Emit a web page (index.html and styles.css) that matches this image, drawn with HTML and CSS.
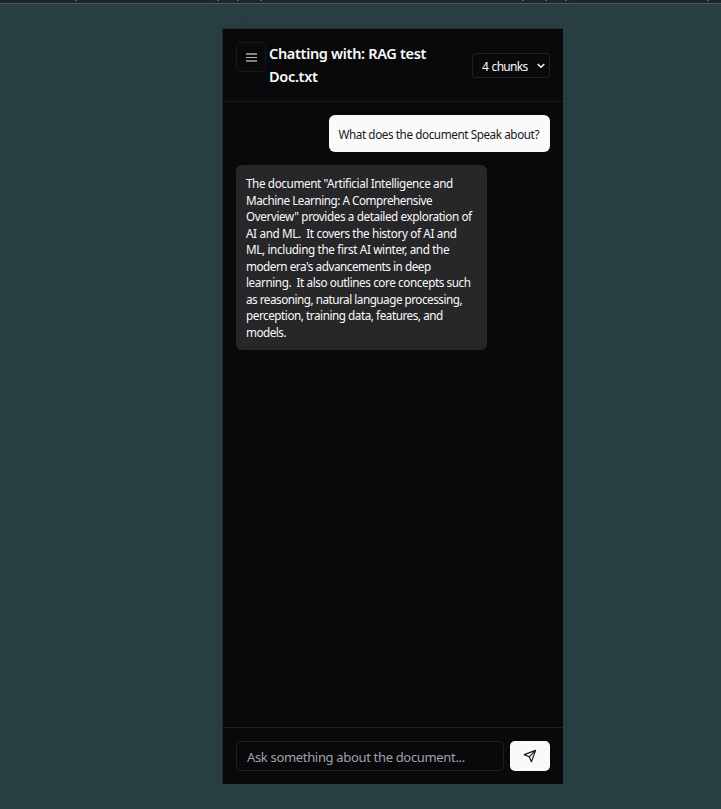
FILE: index.html
```html
<!DOCTYPE html>
<html lang="en">
<head>
<meta charset="utf-8">
<title>Document chat</title>
<link rel="stylesheet" href="styles.css">
</head>
<body>
<div class="topbar"><i class="tick t1"></i><i class="tick t2"></i><i class="tick t3"></i><i class="tick t4"></i><i class="tick t5"></i><i class="tick t6"></i><i class="tick t7"></i><i class="tick t8"></i></div>
<main class="panel">
  <header class="header">
    <button class="menu" aria-label="Menu">
      <svg width="11" height="9" viewBox="0 0 11 9" fill="none"><path d="M0 1h11" stroke="#858585" stroke-width="2"/><path d="M0 4.5h11" stroke="#b5b5b5"/><path d="M0 8h11" stroke="#a5a5a5" stroke-width="1.5"/></svg>
    </button>
    <h1 class="title">Chatting with: RAG test<br>Doc.txt</h1>
    <div class="select"><span>4 chunks</span>
      <svg width="8" height="6" viewBox="0 0 8 6" fill="none" stroke="#fff" stroke-width="1.4"><path d="M.7 1L4 4.3 7.3 1"/></svg>
    </div>
  </header>
  <section class="messages">
    <div class="bubble user"><span>What does the document Speak about?</span></div>
    <div class="bubble bot"><span class="l1">The document "Artificial Intelligence and</span>
<span class="l2">Machine Learning: A Comprehensive</span>
<span class="l3">Overview" provides a detailed exploration of</span>
<span class="l4">AI and ML.  It covers the history of AI and</span>
<span class="l5">ML, including the first AI winter, and the</span>
<span class="l6">modern era's advancements in deep</span>
<span class="l7">learning.  It also outlines core concepts such</span>
<span class="l8">as reasoning, natural language processing,</span>
<span class="l9">perception, training data, features, and</span>
<span class="l10">models.</span></div>
  </section>
  <footer class="footer">
    <div class="input"><span>Ask something about the document...</span></div>
    <button class="send" aria-label="Send">
      <svg width="14" height="14" viewBox="0 0 14 14" fill="none" stroke="#18181b" stroke-width="1.15" stroke-linejoin="round"><path d="M12.6 1.4L1.2 5.6l5 2.2 2.2 5z M12.6 1.4L6.2 7.8"/></svg>
    </button>
  </footer>
</main>
</body>
</html>
```
FILE: styles.css
```css
* { box-sizing: border-box; }
body {
  margin: 0;
  width: 721px;
  height: 809px;
  overflow: hidden;
  background: #284044;
  font-family: "Noto Sans", "Liberation Sans", sans-serif;
  color: #fafafa;
}
.topbar {
  position: relative;
  height: 4px;
  background: #1e2628;
  border-bottom: 1px solid #43595d;
}
.tick { position: absolute; top: 0; width: 2px; height: 1px; background: #48656a; }
.t1 { left: 75px; } .t2 { left: 217px; } .t3 { left: 237px; } .t4 { left: 260px; }
.t5 { left: 522px; } .t6 { left: 545px; } .t7 { left: 565px; } .t8 { left: 707px; }
.panel {
  width: 341px;
  height: 755px;
  margin: 25px 0 0 222px;
  display: flex;
  flex-direction: column;
  background: #09090b;
  border-left: 1px solid #24292b;
  box-shadow: 0 -1px 0 #252e30, 0 -3px 18px rgba(48, 54, 60, .5);
}
.header {
  height: 73px;
  padding: 13px;
  display: flex;
  border-bottom: 1px solid #19191c;
}
.menu {
  width: 30px;
  height: 30px;
  padding: 1px 0 0 1px;
  display: grid;
  place-items: center;
  background: #09090b;
  border: 1px solid #19191c;
  border-radius: 5px;
}
.title {
  margin: 0 0 0 3px;
  font-size: 14.5px;
  font-weight: 600;
  line-height: 23px;
  letter-spacing: -.32px;
  white-space: nowrap;
  flex: 1;
}
.select {
  width: 78px;
  height: 25px;
  margin-top: 11px;
  padding: 2px 4px 0 9px;
  display: flex;
  align-items: center;
  justify-content: space-between;
  border: 1px solid #202023;
  border-radius: 3px;
  font-size: 12px;
  letter-spacing: -.7px;
  word-spacing: 1px;
  white-space: nowrap;
}
.select svg { margin-bottom: 1px; }
.messages {
  flex: 1;
  padding: 13px;
  display: flex;
  flex-direction: column;
  gap: 13px;
}
.bubble {
  font-size: 11.7px;
  line-height: 16.5px;
  border-radius: 6px;
  white-space: pre;
}
.user {
  align-self: flex-end;
  width: 221.5px;
  height: 37px;
  padding: 11px 10px;
  background: #fafafa;
  color: #18181b;
  letter-spacing: -.41px;
}
.bot {
  width: 251px;
  height: 185px;
  padding: 10px;
  background: #27272a;
}
.l1 { letter-spacing: -.38px; }
.l2 { letter-spacing: -.46px; }
.l3 { letter-spacing: -.39px; }
.l4 { letter-spacing: -.35px; }
.l5 { letter-spacing: -.36px; }
.l6 { letter-spacing: -.45px; }
.l7 { letter-spacing: -.4px; }
.l8 { letter-spacing: -.48px; }
.l9 { letter-spacing: -.45px; }
.l10 { letter-spacing: -.5px; }
.footer {
  height: 57px;
  padding: 13px;
  display: flex;
  gap: 6px;
  border-top: 1px solid #202023;
}
.input {
  flex: 1;
  height: 30px;
  padding: 0 10px;
  line-height: 31px;
  border: 1px solid #202023;
  border-radius: 5px;
  color: #a1a1aa;
  font-size: 13px;
  letter-spacing: -.33px;
  white-space: nowrap;
}
.send {
  width: 40px;
  height: 30px;
  padding: 0;
  display: grid;
  place-items: center;
  background: #fafafa;
  border: 0;
  border-radius: 5px;
}
```
